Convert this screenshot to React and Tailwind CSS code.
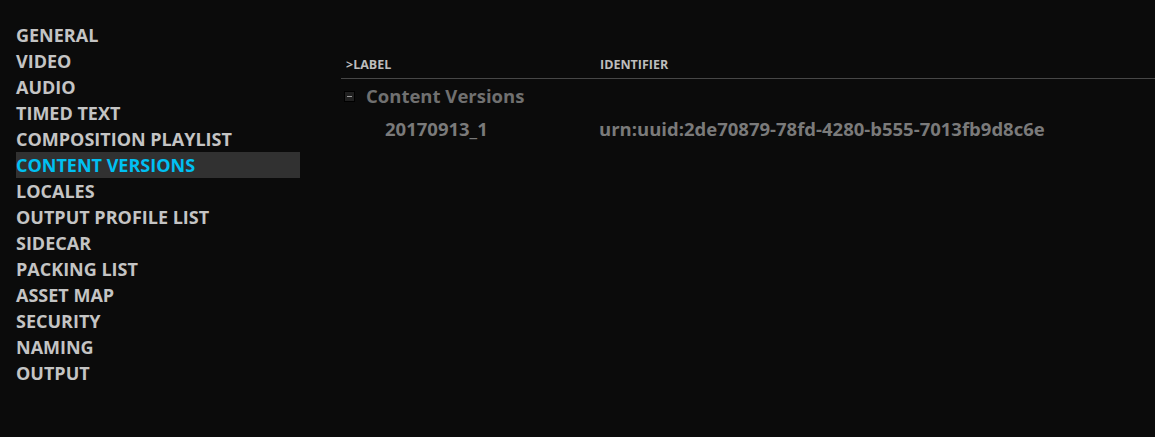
import React from "react";

const items = [
  "GENERAL",
  "VIDEO",
  "AUDIO",
  "TIMED TEXT",
  "COMPOSITION PLAYLIST",
  "CONTENT VERSIONS",
  "LOCALES",
  "OUTPUT PROFILE LIST",
  "SIDECAR",
  "PACKING LIST",
  "ASSET MAP",
  "SECURITY",
  "NAMING",
  "OUTPUT",
];

export default function App() {
  return (
    <div
      className="w-[1155px] h-[437px] bg-[#0b0b0b] flex overflow-hidden"
      style={{ fontFamily: '"Open Sans", "Noto Sans", sans-serif' }}
    >
      <div className="w-[300px] pl-4 pt-[22px] flex flex-col">
        {items.map((it) => {
          const active = it === "CONTENT VERSIONS";
          return (
            <div
              key={it}
              className={
                active
                  ? "h-[26px] flex items-center bg-[#313131] text-[#00c0f2] text-[18px] font-bold leading-none"
                  : "h-[26px] flex items-center text-[#c4c4c4] text-[18px] font-bold leading-none"
              }
            >
              {it}
            </div>
          );
        })}
      </div>
      <div className="flex-1 pl-[41px] pt-[52px] flex flex-col">
        <div className="h-[27px] flex items-center border-b border-[#474747] text-[12.5px] font-bold text-[#bdbdbd] leading-none">
          <div className="w-[259px] pl-[5px]">&gt;LABEL</div>
          <div>IDENTIFIER</div>
        </div>
        <div className="h-[34px] flex items-center pl-[3px] text-[#707070] text-[18.5px] font-bold leading-none">
          <div className="w-[11px] h-[11px] bg-[#202020] border border-[#000] flex items-center justify-center mr-[11px]">
            <div className="w-[5px] h-[1px] bg-[#9a9a9a]"></div>
          </div>
          Content Versions
        </div>
        <div className="h-[32px] flex items-center text-[#7a7a7a] text-[18.5px] font-bold leading-none">
          <div className="w-[258px] pl-[44px]">20170913_1</div>
          <div>urn:uuid:2de70879-78fd-4280-b555-7013fb9d8c6e</div>
        </div>
      </div>
    </div>
  );
}
